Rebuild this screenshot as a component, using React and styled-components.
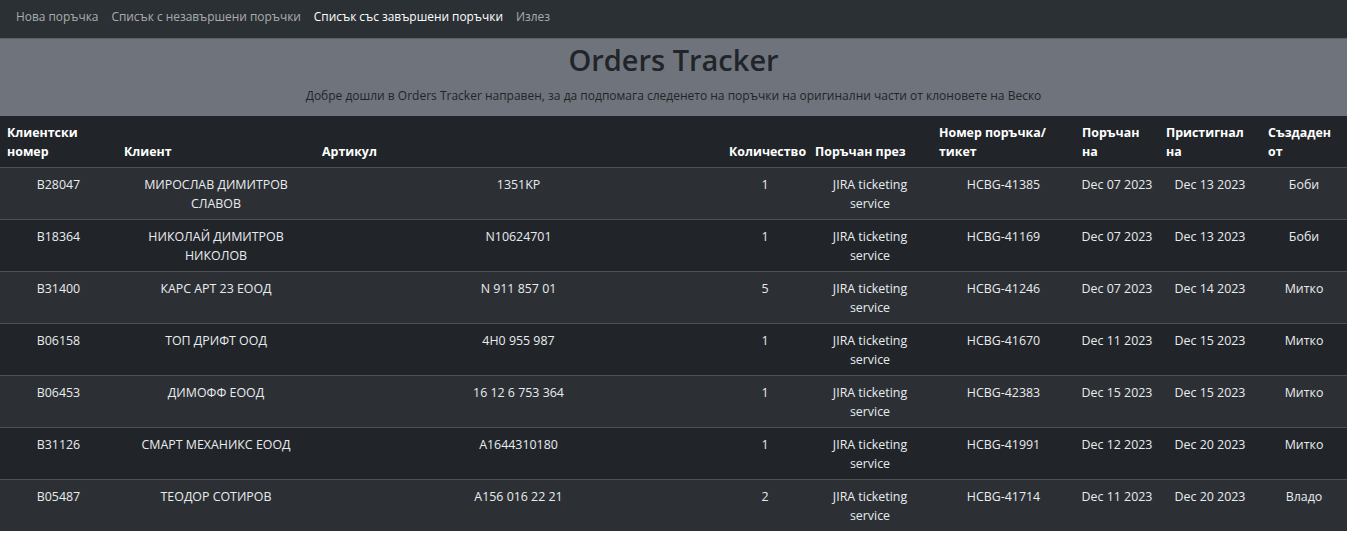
import React from 'react'
import styled, { createGlobalStyle } from 'styled-components'

const GlobalStyle = createGlobalStyle`
    body {
        margin: 0;
        background: #ffffff;
        font-family: "Open Sans", "Noto Sans", sans-serif;
        color: #dee2e6;
    }
`

const Navbar = styled.nav`
    height: 38px;
    background-color: #2b3035;
    display: flex;
    align-items: flex-start;
    padding: 7px 16px 0;
    box-sizing: border-box;
    gap: 13px;
`

const NavLink = styled.a`
    font-size: 11.9px;
    line-height: 19px;
    text-decoration: none;
    color: ${(p) => (p.$active ? '#ffffff' : 'rgba(255, 255, 255, 0.6)')};
    cursor: pointer;
`

const Hero = styled.header`
    height: 78px;
    background-color: #6f747c;
    border-top: 1px solid #5c6169;
    box-sizing: border-box;
    display: flex;
    flex-direction: column;
    align-items: center;
    color: #212529;
`

const Title = styled.h1`
    margin: 1px 0 0;
    font-size: 29px;
    font-weight: 600;
    line-height: 40px;
`

const Subtitle = styled.p`
    margin: 7px 0 0;
    font-size: 12px;
    line-height: 18px;
`

const Table = styled.table`
    width: 100%;
    table-layout: fixed;
    border-collapse: collapse;
    font-size: 12.4px;
    line-height: 19px;
`

const Th = styled.th`
    text-align: left;
    vertical-align: bottom;
    padding: 7px 5px 6px 7px;
    color: #ffffff;
    font-weight: 700;
    background-color: #212529;
    border-bottom: 1px solid #4d5154;
    white-space: ${(p) => (p.$nowrap ? 'nowrap' : 'normal')};
`

const Row = styled.tr`
    background-color: ${(p) => (p.$odd ? '#2c3034' : '#212529')};
    border-bottom: ${(p) => (p.$last ? 'none' : '1px solid #4d5154')};
`

const Td = styled.td`
    text-align: center;
    vertical-align: top;
    padding: 7px 6px 6px;
    height: 38px;
    color: #e9ecef;
    white-space: ${(p) => (p.$nowrap ? 'nowrap' : 'normal')};
`

const widths = [117, 198, 407, 86, 124, 143, 84, 102, 86]

const headers = [
    'Клиентски номер',
    'Клиент',
    'Артикул',
    'Количество',
    'Поръчан през',
    'Номер поръчка/ тикет',
    'Поръчан на',
    'Пристигнал на',
    'Създаден от',
]

const orders = [
    ['B28047', 'МИРОСЛАВ ДИМИТРОВ СЛАВОВ', '1351KP', '1', 'JIRA ticketing service', 'HCBG-41385', 'Dec 07 2023', 'Dec 13 2023', 'Боби'],
    ['B18364', 'НИКОЛАЙ ДИМИТРОВ НИКОЛОВ', 'N10624701', '1', 'JIRA ticketing service', 'HCBG-41169', 'Dec 07 2023', 'Dec 13 2023', 'Боби'],
    ['B31400', 'КАРС АРТ 23 ЕООД', 'N 911 857 01', '5', 'JIRA ticketing service', 'HCBG-41246', 'Dec 07 2023', 'Dec 14 2023', 'Митко'],
    ['B06158', 'ТОП ДРИФТ ООД', '4H0 955 987', '1', 'JIRA ticketing service', 'HCBG-41670', 'Dec 11 2023', 'Dec 15 2023', 'Митко'],
    ['B06453', 'ДИМОФФ ЕООД', '16 12 6 753 364', '1', 'JIRA ticketing service', 'HCBG-42383', 'Dec 15 2023', 'Dec 15 2023', 'Митко'],
    ['B31126', 'СМАРТ МЕХАНИКС ЕООД', 'A1644310180', '1', 'JIRA ticketing service', 'HCBG-41991', 'Dec 12 2023', 'Dec 20 2023', 'Митко'],
    ['B05487', 'ТЕОДОР СОТИРОВ', 'A156 016 22 21', '2', 'JIRA ticketing service', 'HCBG-41714', 'Dec 11 2023', 'Dec 20 2023', 'Владо'],
]

export default function App() {
    return (
        <>
            <GlobalStyle />
            <Navbar>
                <NavLink>Нова поръчка</NavLink>
                <NavLink>Списък с незавършени поръчки</NavLink>
                <NavLink $active>Списък със завършени поръчки</NavLink>
                <NavLink>Излез</NavLink>
            </Navbar>
            <Hero>
                <Title>Orders Tracker</Title>
                <Subtitle>Добре дошли в Orders Tracker направен, за да подпомага следенето на поръчки на оригинални части от клоновете на Веско</Subtitle>
            </Hero>
            <Table>
                <colgroup>
                    {widths.map((w, i) => <col key={i} style={{ width: w }} />)}
                </colgroup>
                <thead>
                    <tr>
                        {headers.map((h, i) => (
                            <Th key={i} $nowrap={i === 3 || i === 4}>{h}</Th>
                        ))}
                    </tr>
                </thead>
                <tbody>
                    {orders.map((o, i) => (
                        <Row key={i} $odd={i % 2 === 0} $last={i === orders.length - 1}>
                            {o.map((c, j) => <Td key={j} $nowrap={j >= 5}>{c}</Td>)}
                        </Row>
                    ))}
                </tbody>
            </Table>
        </>
    )
}
